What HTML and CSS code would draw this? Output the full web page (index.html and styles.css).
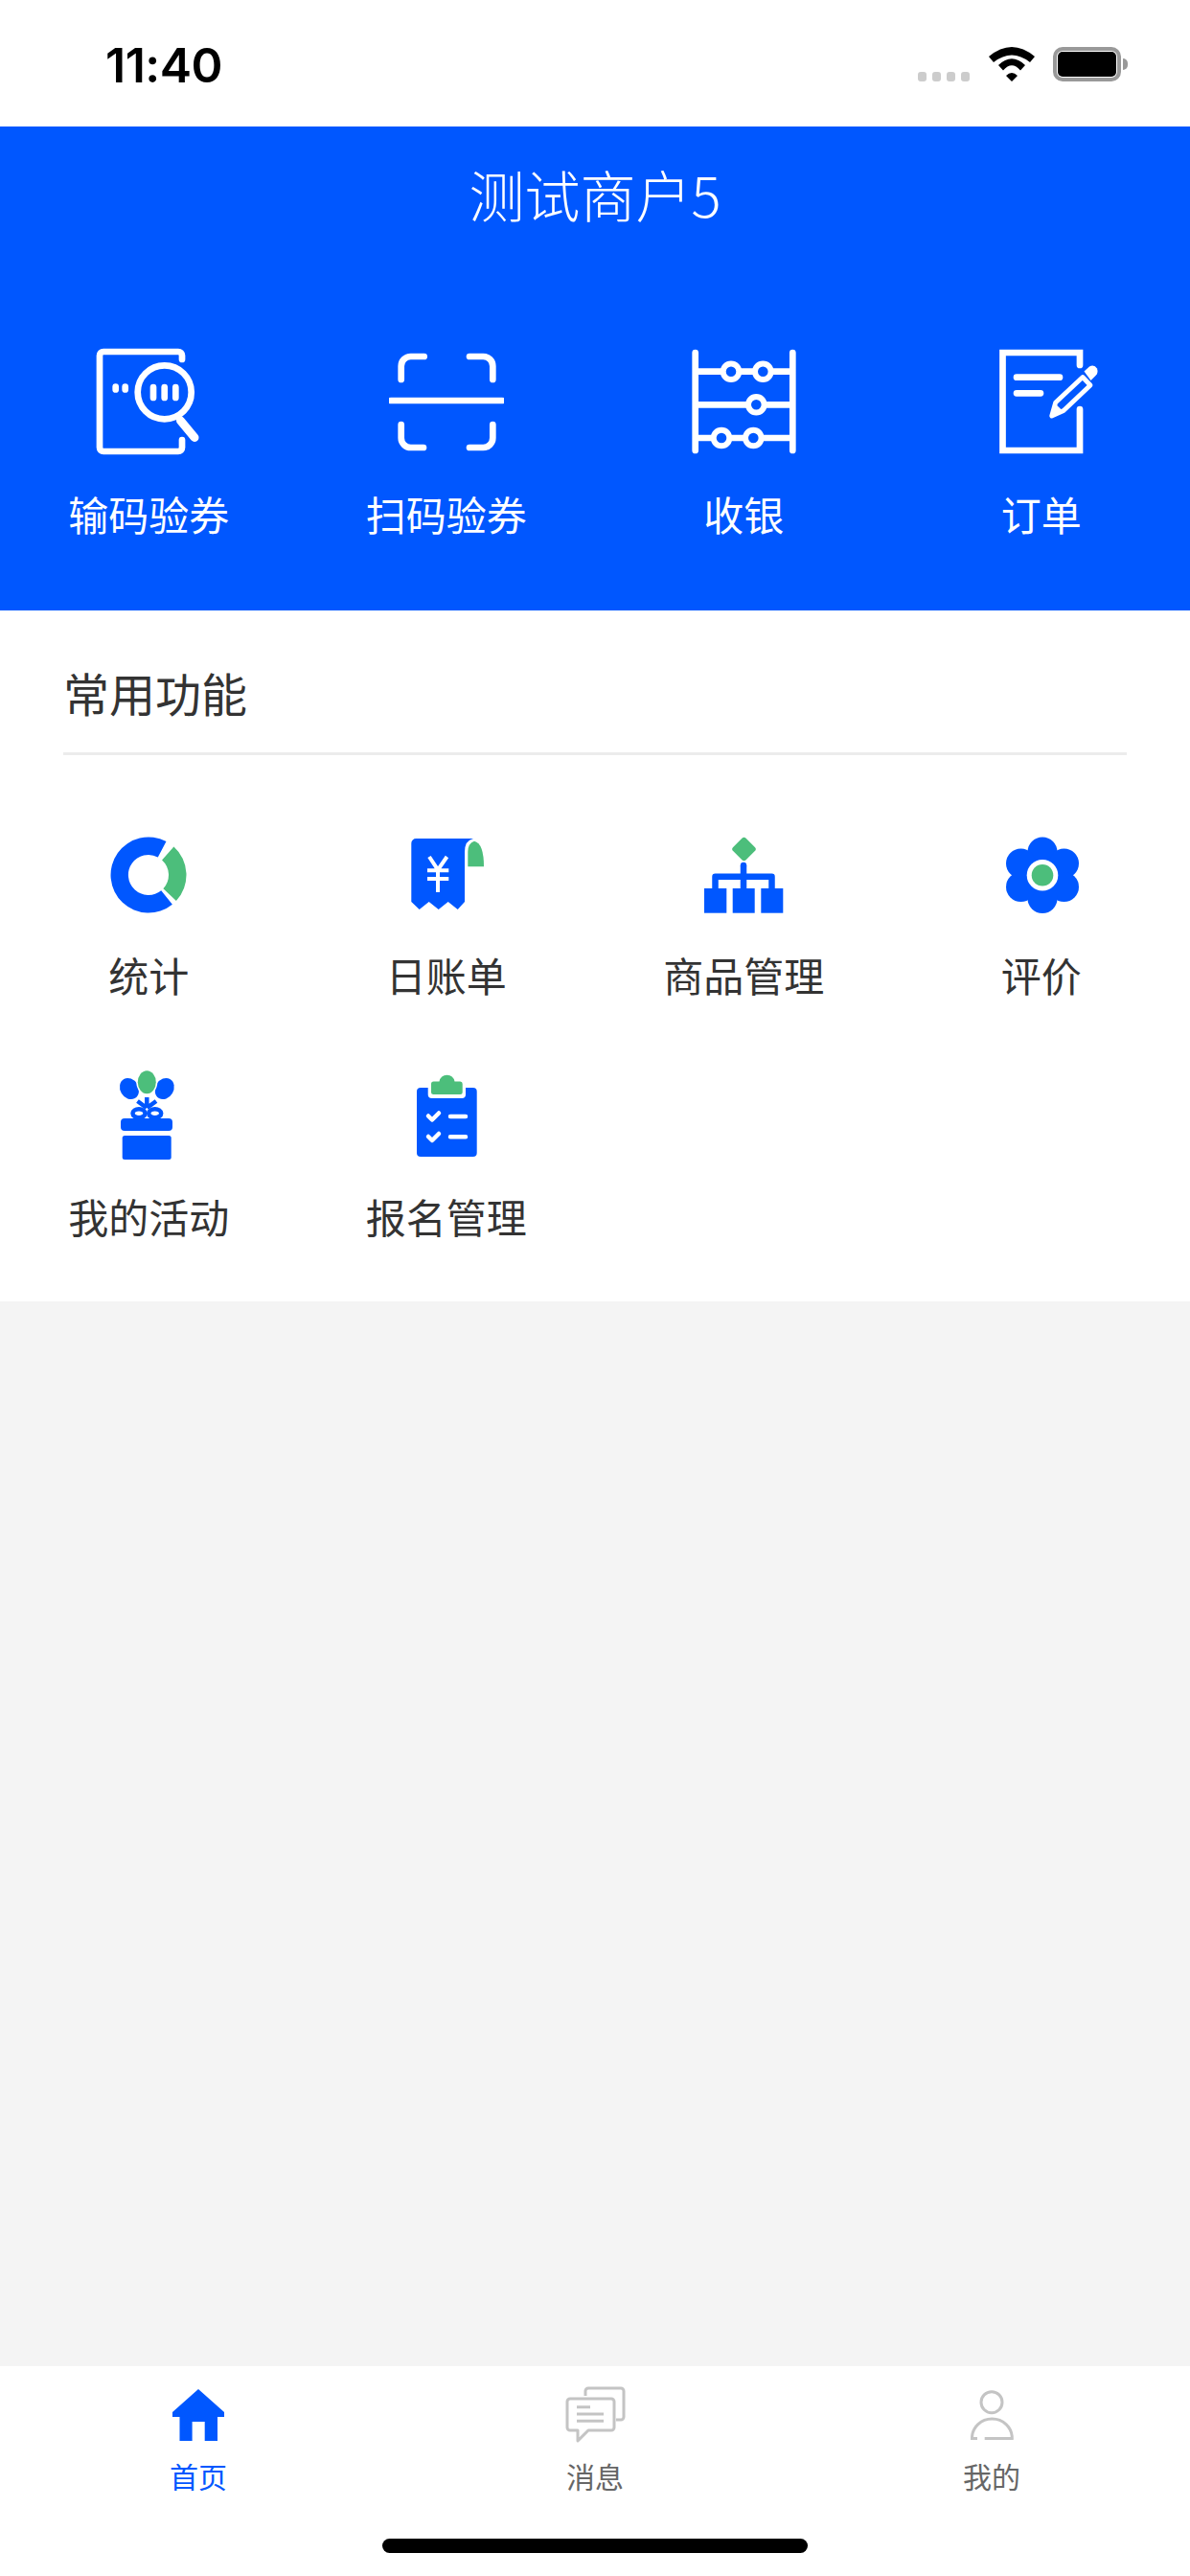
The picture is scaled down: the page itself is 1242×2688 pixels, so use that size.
FILE: index.html
```html
<!DOCTYPE html>
<html lang="zh">
<head>
<meta charset="utf-8">
<title>测试商户5</title>
<link rel="stylesheet" href="styles.css">
</head>
<body>
<div class="app">
  <div class="status">
    <span class="time">11:40</span>
    <div class="status-right">
      <div class="dots"><i></i><i></i><i></i><i></i></div>
      <svg class="wifi" viewBox="0 0 48 37" width="48" height="37"><path d="M0 10Q24 -10 48 10L43 16Q24 1 5 16ZM10 19Q24 5.500 38 19L33 24.500Q24 14 15 24.500ZM18 30Q24 24 30 30L24 36Z" fill="#000"/></svg>
      <div class="battery"><div class="battery-fill"></div></div>
      <div class="battery-nub"></div>
    </div>
  </div>

  <header class="head">
    <h1 class="shop">测试商户5</h1>
    <div class="quick">
      <div class="cell">
        <svg class="qi" viewBox="0 0 120 120" fill="none" stroke="#fff" stroke-width="6.700" stroke-linecap="round">
          <path d="M95 15V11a4 4 0 0 0-4-4H13a4 4 0 0 0-4 4V107a4 4 0 0 0 4 4H91a4 4 0 0 0 4-4V99"/>
          <circle cx="76.700" cy="49.300" r="28"/>
          <path d="M93.500 79L108 96.500" stroke-width="9"/>
          <path d="M65 44V55M76.700 44V55M88.300 44V55M25.700 43.500V46.500M35.700 43.500V46.500"/>
        </svg>
        <span class="ql">输码验券</span>
      </div>
      <div class="cell">
        <svg class="qi" viewBox="0 0 120 120" fill="none" stroke="#fff" stroke-width="6.700" stroke-linecap="round">
          <path d="M12.700 36V22a10 10 0 0 1 10-10H36.700M84 12h14.300a10 10 0 0 1 10 10V36M12.700 83V97a10 10 0 0 0 10 10H36M84 107h14.300a10 10 0 0 0 10-10V83M2 58H118"/>
        </svg>
        <span class="ql">扫码验券</span>
      </div>
      <div class="cell">
        <svg class="qi" viewBox="0 0 120 120" fill="none" stroke="#fff" stroke-width="6.700" stroke-linecap="round">
          <path d="M9.700 8V110M111.300 8V110M9.700 27.700H111.300M9.700 62.300H111.300M9.700 97H111.300"/>
          <g fill="#0057ff" stroke-width="6">
            <circle cx="47" cy="27.700" r="8.300"/><circle cx="80.300" cy="27.700" r="8.300"/>
            <circle cx="73.300" cy="62.300" r="8.300"/>
            <circle cx="37" cy="97" r="8.300"/><circle cx="70.300" cy="97" r="8.300"/>
          </g>
        </svg>
        <span class="ql">收银</span>
      </div>
      <div class="cell">
        <svg class="qi" viewBox="0 0 120 120" fill="none" stroke="#fff" stroke-width="6.700" stroke-linecap="round">
          <path d="M100 21V8H19.500V110H100V67" stroke-linejoin="miter"/>
          <path d="M34 33.700H79M34 50.300H59"/>
          <path d="M74.700 60L103 33.500L111 42L83 68.500L70.700 74Z" stroke-width="4.800" stroke-linejoin="round"/>
          <path d="M104.500 27.500L110 22.500Q115 20 118 24.500Q119.500 29 116.500 32L111.500 37Z" fill="#fff" stroke="none"/>
          <path d="M70.700 74L74 61L83.500 70Z" fill="#fff" stroke="none"/>
        </svg>
        <span class="ql">订单</span>
      </div>
    </div>
  </header>

  <section class="panel">
    <h2 class="panel-title">常用功能</h2>
    <div class="rule"></div>
    <div class="grid">
      <div class="cell">
        <svg class="fi" viewBox="0 0 100 100"><path d="M68.500 15.100A39.500 39.500 0 1 0 74.900 80.700L63.200 66.300A21 21 0 1 1 59.800 31.500Z" fill="#0057ff"/><path d="M76.400 20.600A39.500 39.500 0 0 1 78.900 76.900L65.400 64.300A21 21 0 0 0 64.050 34.400Z" fill="#4cbe7b"/></svg>
        <span class="fl">统计</span>
      </div>
      <div class="cell">
        <svg class="fi" viewBox="0 0 100 100">
          <path d="M13.300 17a5 5 0 0 1 5-5H78Q69 14 69 26V78L61.700 86L51.700 78L41.700 86L31.700 78L21.700 86L13.300 78Z" fill="#0057ff"/>
          <path d="M72.300 41.300V26Q72.300 17 79 14.700Q89 17 89 41.300Z" fill="#4cbe7b"/>
          <path d="M32 31L41 44.700L50.500 31M30 45.300H52.300M30 54H52.300M41 44.700V68" fill="none" stroke="#fff" stroke-width="4"/>
        </svg>
        <span class="fl">日账单</span>
      </div>
      <div class="cell">
        <svg class="fi" viewBox="0 0 100 100">
          <rect x="41" y="13.500" width="19" height="19" rx="3" transform="rotate(45 50.500 23)" fill="#4cbe7b"/>
          <path d="M50 40V64M20.500 64V51.700H79.500V64" fill="none" stroke="#0057ff" stroke-width="6.500" stroke-linejoin="round"/>
          <circle cx="50" cy="40" r="3.200" fill="#0057ff"/>
          <rect x="9" y="64" width="23.300" height="25.700" fill="#0057ff"/>
          <rect x="38.700" y="64" width="23" height="25.700" fill="#0057ff"/>
          <rect x="68.300" y="64" width="23" height="25.700" fill="#0057ff"/>
        </svg>
        <span class="fl">商品管理</span>
      </div>
      <div class="cell">
        <svg class="fi" viewBox="0 0 100 100">
          <g fill="#0057ff">
            <circle cx="51" cy="50.300" r="25"/>
            <circle cx="51" cy="26" r="15.500"/><circle cx="73.500" cy="38" r="15.500"/><circle cx="73.500" cy="62.500" r="15.500"/>
            <circle cx="51" cy="74.500" r="15.500"/><circle cx="28.500" cy="62.500" r="15.500"/><circle cx="28.500" cy="38" r="15.500"/>
          </g>
          <circle cx="51" cy="50.300" r="16.300" fill="#fff"/>
          <circle cx="51" cy="50.300" r="11.300" fill="#4cbe7b"/>
        </svg>
        <span class="fl">评价</span>
      </div>
      <div class="cell">
        <svg class="fi" viewBox="0 0 100 100">
          <ellipse cx="30" cy="21" rx="9.500" ry="11.500" transform="rotate(-30 30 21)" fill="#0057ff"/>
          <ellipse cx="66.700" cy="21" rx="9.500" ry="11.500" transform="rotate(30 66.700 21)" fill="#0057ff"/>
          <ellipse cx="48.300" cy="14.300" rx="11" ry="13.300" fill="#fff"/>
          <ellipse cx="48.300" cy="14.300" rx="9.500" ry="12" fill="#4cbe7b"/>
          <path d="M48.300 30V41M38.500 34L48 41M58 34L48.500 41" fill="none" stroke="#0057ff" stroke-width="4.500"/>
          <ellipse cx="40" cy="46.700" rx="6.500" ry="4.500" fill="#fff" stroke="#0057ff" stroke-width="4.500"/>
          <ellipse cx="56.700" cy="46.700" rx="6.500" ry="4.500" fill="#fff" stroke="#0057ff" stroke-width="4.500"/>
          <rect x="21" y="52" width="54" height="13" rx="4" fill="#0057ff"/>
          <rect x="22.700" y="70" width="51" height="25" rx="2.500" fill="#0057ff"/>
        </svg>
        <span class="fl">我的活动</span>
      </div>
      <div class="cell">
        <svg class="fi" viewBox="0 0 100 100">
          <rect x="19" y="20" width="62.700" height="72" rx="4" fill="#0057ff"/>
          <path d="M30.700 18H70V27a4 4 0 0 1-4 4H34.700a4 4 0 0 1-4-4Z" fill="#fff"/>
          <path d="M34 16a2.500 2.500 0 0 1 2.500-2.500H42.500Q44 6.700 50.500 6.700Q57 6.700 58.500 13.500H64a2.500 2.500 0 0 1 2.700 2.500V24.500a2.500 2.500 0 0 1-2.500 2.500H36.500a2.500 2.500 0 0 1-2.500-2.500Z" fill="#4cbe7b"/>
          <path d="M31 49.500L35 53.500L42 46.500M31 71L35 75L42 68M54 50H70M54 71.300H70" fill="none" stroke="#fff" stroke-width="4.500" stroke-linecap="round" stroke-linejoin="round"/>
        </svg>
        <span class="fl">报名管理</span>
      </div>
    </div>
  </section>

  <div class="fill"></div>

  <nav class="tabs">
    <div class="tab active">
      <svg class="ti" viewBox="0 0 60 60"><path d="M30 3L57 27V32H50V57H36.700V37H23.600V57H10.500V32H3V27Z" fill="#0057ff"/></svg>
      <span>首页</span>
    </div>
    <div class="tab">
      <svg class="ti wide" viewBox="0 0 70 60" fill="none" stroke="#c4c4c4" stroke-width="3">
        <path d="M25 10V5a3 3 0 0 1 3-3H62a3 3 0 0 1 3 3V32a3 3 0 0 1-3 3H57"/>
        <path d="M9 13H52a3 3 0 0 1 3 3V43a3 3 0 0 1-3 3H28L17 57V46H9a3 3 0 0 1-3-3V16a3 3 0 0 1 3-3Z" stroke-linejoin="round"/>
        <path d="M16 21.700H30M16 29H44M16 36.300H44"/>
      </svg>
      <span>消息</span>
    </div>
    <div class="tab">
      <svg class="ti" viewBox="0 0 60 60" fill="none" stroke="#c4c4c4" stroke-width="3">
        <circle cx="30" cy="16.700" r="11"/>
        <path d="M9.500 54A20.900 20 0 0 1 51.300 54V55M22.700 54.500H52.700M8 54.500H15"/>
      </svg>
      <span>我的</span>
    </div>
    <div class="home-bar"></div>
  </nav>
</div>
</body>
</html>
```
FILE: styles.css
```css
* { box-sizing: border-box; }
html, body { margin: 0; padding: 0; }
body { font-family: "Noto Sans CJK SC", "Noto Sans", sans-serif; background: #f4f4f4; }
.app { width: 1242px; height: 2688px; display: flex; flex-direction: column; overflow: hidden; }

.status { height: 132px; background: #fff; display: flex; justify-content: space-between; padding: 0 65px 0 110px; }
.time { font-family: Inter, "Liberation Sans", sans-serif; font-weight: 600; font-size: 50px; line-height: 36px; margin-top: 50px; color: #000; letter-spacing: -0.5px; }
.status-right { display: flex; align-items: flex-start; padding-top: 49px; }
.dots { display: flex; gap: 6px; margin-top: 26px; margin-right: 20px; }
.dots i { width: 9px; height: 10px; border-radius: 3px; background: #cccccc; display: block; }
.wifi { display: block; margin-right: 19px; }
.battery { width: 71px; height: 36px; border: 4px solid #999; border-radius: 10px; padding: 1px; }
.battery-fill { width: 100%; height: 100%; background: #000; border-radius: 5px; }
.battery-nub { width: 5px; height: 12px; background: #999; border-radius: 0 6px 6px 0; margin: 12px 0 0 2px; }

.head { height: 505px; background: #0057ff; color: #fff; }
.shop { margin: 0; font-weight: 300; font-size: 58px; line-height: 140px; text-align: center; }
.quick { display: grid; grid-template-columns: repeat(4, 1fr); padding-top: 88px; }
.cell { display: flex; flex-direction: column; align-items: center; }
.qi { width: 120px; height: 120px; display: block; }
.ql { font-size: 42px; line-height: 58px; margin-top: 27px; }

.panel { height: 721px; background: #fff; padding-top: 55px; }
.panel-title { margin: 0 0 0 66px; font-weight: 400; font-size: 48px; line-height: 60px; color: #333; }
.rule { height: 3px; margin: 33px 66px 0 66px; background: #ececec; }
.grid { display: grid; grid-template-columns: repeat(4, 1fr); grid-auto-rows: 252px; padding-top: 75px; }
.fi { width: 100px; height: 100px; display: block; }
.fl { font-size: 42px; line-height: 58px; margin-top: 25px; color: #333; }

.fill { height: 1111px; background: #f4f4f4; }

.tabs { flex: 1; position: relative; background: #fff; display: grid; grid-template-columns: repeat(3, 1fr); padding-top: 21px; align-content: start; }
.tab { display: flex; flex-direction: column; align-items: center; color: #666; font-size: 30px; line-height: 42px; }
.tab span { margin-top: 12px; }
.tab.active { color: #0057ff; }
.ti { width: 60px; height: 60px; display: block; }
.ti.wide { width: 70px; }
.home-bar { position: absolute; left: 399px; top: 180px; width: 444px; height: 15px; border-radius: 8px; background: #000; }
```
